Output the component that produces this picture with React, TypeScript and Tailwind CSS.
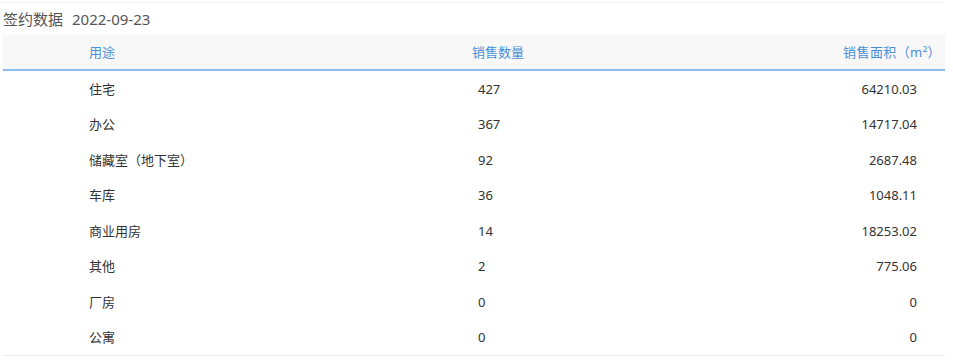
import React from 'react';

const rows = [
  { use: '住宅', count: '427', area: '64210.03' },
  { use: '办公', count: '367', area: '14717.04' },
  { use: '储藏室（地下室）', count: '92', area: '2687.48' },
  { use: '车库', count: '36', area: '1048.11' },
  { use: '商业用房', count: '14', area: '18253.02' },
  { use: '其他', count: '2', area: '775.06' },
  { use: '厂房', count: '0', area: '0' },
  { use: '公寓', count: '0', area: '0' },
];

const App: React.FC = () => {
  return (
    <div className="w-[953px] h-[360px] bg-white overflow-hidden font-['Noto_Sans','Noto_Sans_CJK_SC',sans-serif]">
      <div className="w-[945px] mt-[2px] border-t border-[#f2f2f2]">
        {/* Title */}
        <div className="h-[32px] flex items-center pl-[3px] text-[15px] text-[#555]">
          <span>签约数据</span>
          <span className="ml-[9px]">2022-09-23</span>
        </div>

        {/* Table */}
        <div className="ml-[3px] w-[942px]">
          <div className="h-[36px] bg-[#f8f8f8] flex items-center pt-[2px] text-[13px] text-[#4a8fd8] border-b-2 border-[#8cbcec]">
            <div className="w-[469px] pl-[86px]">用途</div>
            <div className="flex-1">销售数量</div>
            <div className="pr-[4px] tracking-[0.4px]">销售面积（m²）</div>
          </div>
          {rows.map((r) => (
            <div key={r.use} className="h-[35.5px] flex items-center pt-[1px] text-[13px] text-[#333]">
              <div className="w-[475px] pl-[86px]">{r.use}</div>
              <div className="flex-1">{r.count}</div>
              <div className="pr-[28px]">{r.area}</div>
            </div>
          ))}
          <div className="border-t border-[#eeeeee]" />
        </div>
      </div>
    </div>
  );
};

export default App;
